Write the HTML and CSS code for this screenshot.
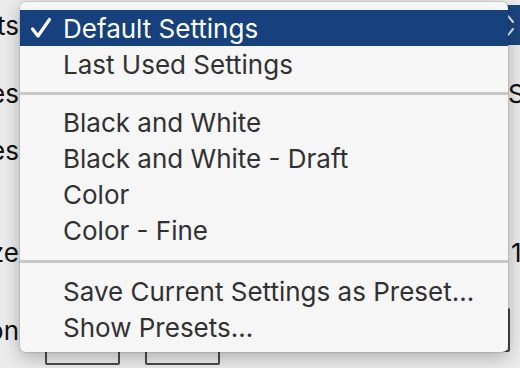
FILE: index.html
```html
<!DOCTYPE html>
<html lang="en">
<head>
    <meta charset="UTF-8">
    <title>Presets</title>
    <link rel="stylesheet" href="styles.css">
</head>
<body>
    <!-- print dialog behind the menu -->
    <div class="sheet">
        <div class="row row-presets">
            <div class="lbl"><span>Presets</span></div>
            <div class="mid"></div>
            <div class="rt">
                <div class="popup">
                    <svg width="30" height="40" viewBox="0 0 30 40">
                        <polyline points="3,17 8,11 13,17" />
                        <polyline points="3,24 8,30 13,24" />
                    </svg>
                </div>
            </div>
        </div>
        <div class="row row-copies">
            <div class="lbl"><span>Copies</span></div>
            <div class="mid"></div>
            <div class="rt"><span class="rt-text">Size</span></div>
        </div>
        <div class="row row-pages">
            <div class="lbl"><span>Pages</span></div>
            <div class="mid"></div>
            <div class="rt"></div>
        </div>
        <div class="row row-paper">
            <div class="lbl"><span>Paper Size</span></div>
            <div class="mid"></div>
            <div class="rt"><span class="rt-text rt-num">1 of 1</span></div>
        </div>
        <div class="row row-orient">
            <div class="lbl"><span>Orientation</span></div>
            <div class="mid"></div>
            <div class="rt"><div class="side-btn"></div></div>
        </div>
        <div class="row row-buttons">
            <div class="btn"></div>
            <div class="btn"></div>
        </div>
    </div>

    <!-- presets menu -->
    <div class="menu">
        <div class="item selected">
            <span class="check">
                <svg width="22" height="22" viewBox="0 0 22 22">
                    <polyline points="2.5,12 8,19 19.5,2.5" />
                </svg>
            </span>
            <span>Default Settings</span>
        </div>
        <div class="item"><span class="check"></span><span>Last Used Settings</span></div>
        <div class="sep sep-1"></div>
        <div class="item"><span class="check"></span><span>Black and White</span></div>
        <div class="item"><span class="check"></span><span>Black and White - Draft</span></div>
        <div class="item"><span class="check"></span><span>Color</span></div>
        <div class="item"><span class="check"></span><span>Color - Fine</span></div>
        <div class="sep sep-2"></div>
        <div class="item"><span class="check"></span><span>Save Current Settings as Preset…</span></div>
        <div class="item"><span class="check"></span><span>Show Presets…</span></div>
    </div>
</body>
</html>
```

FILE: styles.css
```css
/* base */
body {
    margin: 0;
    width: 520px;
    height: 368px;
    overflow: hidden;
    background: #ebebeb;
    font-family: Inter, 'Liberation Sans', sans-serif;
    font-size: 26px;
    color: #111;
    position: relative;
}

/* dialog rows behind the menu */
.sheet {
    display: flex;
    flex-direction: column;
}

.row {
    display: flex;
    align-items: center;
    height: 36px;
}

.row-presets { margin-top: 5px; height: 40px; }
.row-copies { margin-top: 30px; }
.row-pages { margin-top: 21px; }
.row-paper { margin-top: 66px; }
.row-orient { margin-top: 38px; height: 44px; }

.lbl {
    width: 19px;
    display: flex;
    justify-content: flex-end;
    overflow: hidden;
    white-space: nowrap;
}

.mid {
    flex: 1;
}

.rt {
    width: 14px;
    height: 100%;
    display: flex;
    align-items: center;
    white-space: nowrap;
}

.rt-text {
    margin-left: 2px;
}

.rt-num {
    margin-left: 5px;
}

.popup {
    margin-left: -6px;
    width: 40px;
    height: 40px;
    flex-shrink: 0;
    border-radius: 6px;
    background: #1c467f;
}

.popup polyline {
    fill: none;
    stroke: #dfe6f1;
    stroke-width: 2;
    stroke-linecap: round;
    stroke-linejoin: round;
}

.side-btn {
    margin-left: -36px;
    width: 40px;
    height: 44px;
    flex-shrink: 0;
    box-sizing: border-box;
    border: 2px solid #454545;
    border-radius: 2px;
}

.row-buttons {
    margin-top: -14px;
    height: 27px;
    padding-left: 45px;
    gap: 25px;
}

.btn {
    width: 75px;
    height: 27px;
    box-sizing: border-box;
    border: 2px solid #4a4a4a;
    border-radius: 2px;
}

/* menu */
.menu {
    position: absolute;
    left: 20px;
    top: 2px;
    width: 488px;
    height: 350px;
    box-sizing: border-box;
    padding-top: 8px;
    background: #f6f6f6;
    border-radius: 6px;
    box-shadow: 0 0 0 1px rgba(0,0,0,0.08), 0 5px 18px rgba(0,0,0,0.28);
    color: #313131;
    z-index: 10;
}

.item {
    height: 36px;
    display: flex;
    align-items: center;
    padding-left: 10px;
    white-space: nowrap;
}

.item.selected {
    background: #16417c;
    color: #fff;
}

.check {
    width: 33px;
    height: 22px;
    display: flex;
}

.check polyline {
    fill: none;
    stroke: #fff;
    stroke-width: 3.2;
    stroke-linecap: round;
    stroke-linejoin: round;
}

.sep {
    position: relative;
}

.sep::after {
    content: '';
    display: block;
    height: 3px;
    background: #c8c8c8;
}

.sep-1 { height: 22px; padding-top: 10px; box-sizing: border-box; }
.sep-2 { height: 25px; padding-top: 12px; box-sizing: border-box; }
```
